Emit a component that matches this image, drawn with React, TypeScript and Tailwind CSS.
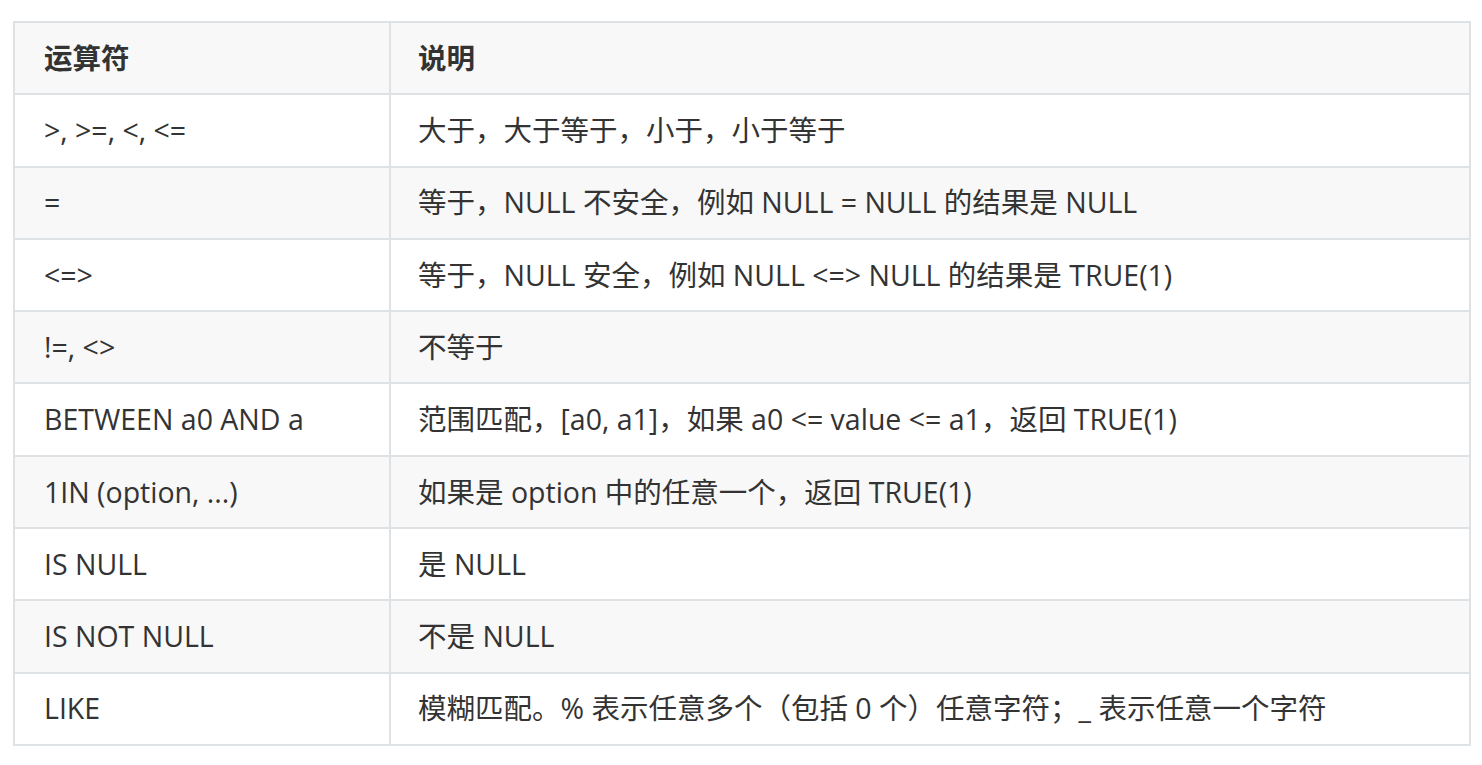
import React from "react";

const rows: [string, string][] = [
  [">, >=, <, <=", "大于，大于等于，小于，小于等于"],
  ["=", "等于，NULL 不安全，例如 NULL = NULL 的结果是 NULL"],
  ["<=>", "等于，NULL 安全，例如 NULL <=> NULL 的结果是 TRUE(1)"],
  ["!=, <>", "不等于"],
  ["BETWEEN a0 AND a", "范围匹配，[a0, a1]，如果 a0 <= value <= a1，返回 TRUE(1)"],
  ["1IN (option, ...)", "如果是 option 中的任意一个，返回 TRUE(1)"],
  ["IS NULL", "是 NULL"],
  ["IS NOT NULL", "不是 NULL"],
  ["LIKE", "模糊匹配。% 表示任意多个（包括 0 个）任意字符；_ 表示任意一个字符"],
];

const App: React.FC = () => {
  return (
    <div className="min-h-screen bg-white pl-[13px] pt-[21px] font-['Open_Sans','Noto_Sans_CJK_SC',sans-serif] text-[28.5px] text-[#333333]">
      <table className="w-[1458px] table-fixed border-collapse">
        <colgroup>
          <col className="w-[376px]" />
          <col />
        </colgroup>
        <thead>
          <tr className="h-[72.3px] bg-[#f8f8f8]">
            <th className="border-2 border-[#dfe2e5] px-[29px] text-left font-bold">运算符</th>
            <th className="border-2 border-[#dfe2e5] px-[27px] text-left font-bold">说明</th>
          </tr>
        </thead>
        <tbody>
          {rows.map(([op, desc], i) => (
            <tr key={op} className={`h-[72.3px] ${i % 2 === 1 ? "bg-[#f8f8f8]" : "bg-white"}`}>
              <td className="border-2 border-[#dfe2e5] px-[29px] whitespace-nowrap">{op}</td>
              <td className="border-2 border-[#dfe2e5] px-[27px] whitespace-nowrap">{desc}</td>
            </tr>
          ))}
        </tbody>
      </table>
    </div>
  );
};

export default App;
